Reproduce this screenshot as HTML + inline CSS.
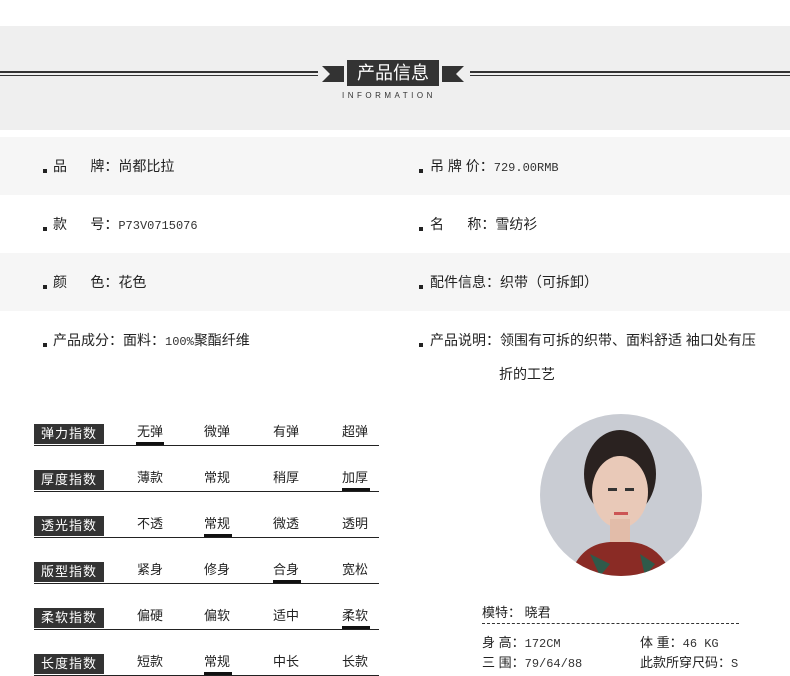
<!DOCTYPE html>
<html><head><meta charset="utf-8"><style>
body{margin:0;width:790px;height:676px;background:#fff;position:relative;overflow:hidden;font-family:"Liberation Sans","Noto Sans CJK SC",sans-serif;color:#222}
.a{position:absolute}
.hdr{left:0;top:26px;width:790px;height:104px;background:#efefef}
.row{left:0;width:790px;height:58px}
.t{font-size:14px;white-space:nowrap}
.dot{width:4px;height:4px;background:#222}
.m{font-family:"Liberation Mono","Noto Sans CJK SC",monospace;font-size:12px;color:#333}
.lab{left:34px;width:70px;height:20px;background:#333;color:#fff;font-size:13px;line-height:20px;text-align:center;letter-spacing:1px}
.ln{left:34px;width:345px;height:1px;background:#222}
.op{font-size:13px;width:40px;text-align:center;margin-top:-3px}
.bar{width:28px;height:3px;background:#111}
</style></head><body>
<div class="a hdr"></div>
<div class="a" style="left:0;top:71px;width:318px;height:2px;background:#333"></div>
<div class="a" style="left:0;top:75px;width:318px;height:1px;background:#333"></div>
<div class="a" style="left:470px;top:71px;width:320px;height:2px;background:#333"></div>
<div class="a" style="left:470px;top:75px;width:320px;height:1px;background:#333"></div>
<svg class="a" style="left:322px;top:63px" width="22" height="22"><polygon points="0,3 22,3 22,19 0,19 8,11" fill="#333"/></svg>
<svg class="a" style="left:442px;top:63px" width="22" height="22"><polygon points="0,3 22,3 14,11 22,19 0,19" fill="#333"/></svg>
<div class="a" style="left:347px;top:60px;width:92px;height:26px;background:#333;color:#fff;font-size:18px;line-height:26px;text-align:center">产品信息</div>
<div class="a" style="left:342px;top:91px;font-size:8px;letter-spacing:3.5px;color:#333">INFORMATION</div>

<div class="a row" style="top:137px;background:#f6f6f6"></div>
<div class="a row" style="top:253px;background:#f6f6f6"></div>

<div class="a dot" style="left:43px;top:169px"></div><div class="a t" style="left:53px;top:156px">品&nbsp;&nbsp;&nbsp;&nbsp;&nbsp;&nbsp;牌：尚都比拉</div>
<div class="a dot" style="left:419px;top:169px"></div><div class="a t" style="left:430px;top:156px">吊 牌 价：<span class="m">729.00RMB</span></div>
<div class="a dot" style="left:43px;top:227px"></div><div class="a t" style="left:53px;top:214px">款&nbsp;&nbsp;&nbsp;&nbsp;&nbsp;&nbsp;号：<span class="m">P73V0715076</span></div>
<div class="a dot" style="left:419px;top:227px"></div><div class="a t" style="left:430px;top:214px">名&nbsp;&nbsp;&nbsp;&nbsp;&nbsp;&nbsp;称：雪纺衫</div>
<div class="a dot" style="left:43px;top:285px"></div><div class="a t" style="left:53px;top:272px">颜&nbsp;&nbsp;&nbsp;&nbsp;&nbsp;&nbsp;色：花色</div>
<div class="a dot" style="left:419px;top:285px"></div><div class="a t" style="left:430px;top:272px">配件信息：织带（可拆卸）</div>
<div class="a dot" style="left:43px;top:343px"></div><div class="a t" style="left:53px;top:330px">产品成分：面料：<span class="m">100%</span>聚酯纤维</div>
<div class="a dot" style="left:419px;top:343px"></div><div class="a t" style="left:430px;top:330px">产品说明：领围有可拆的织带、面料舒适 袖口处有压</div>
<div class="a t" style="left:499px;top:364px">折的工艺</div>

<div class="a lab" style="top:424px">弹力指数</div><div class="a ln" style="top:445px"></div>
<div class="a op" style="left:130px;top:424px">无弹</div><div class="a op" style="left:197px;top:424px">微弹</div><div class="a op" style="left:266px;top:424px">有弹</div><div class="a op" style="left:335px;top:424px">超弹</div>
<div class="a bar" style="left:136px;top:442px"></div>
<div class="a lab" style="top:470px">厚度指数</div><div class="a ln" style="top:491px"></div>
<div class="a op" style="left:130px;top:470px">薄款</div><div class="a op" style="left:197px;top:470px">常规</div><div class="a op" style="left:266px;top:470px">稍厚</div><div class="a op" style="left:335px;top:470px">加厚</div>
<div class="a bar" style="left:342px;top:488px"></div>
<div class="a lab" style="top:516px">透光指数</div><div class="a ln" style="top:537px"></div>
<div class="a op" style="left:130px;top:516px">不透</div><div class="a op" style="left:197px;top:516px">常规</div><div class="a op" style="left:266px;top:516px">微透</div><div class="a op" style="left:335px;top:516px">透明</div>
<div class="a bar" style="left:204px;top:534px"></div>
<div class="a lab" style="top:562px">版型指数</div><div class="a ln" style="top:583px"></div>
<div class="a op" style="left:130px;top:562px">紧身</div><div class="a op" style="left:197px;top:562px">修身</div><div class="a op" style="left:266px;top:562px">合身</div><div class="a op" style="left:335px;top:562px">宽松</div>
<div class="a bar" style="left:273px;top:580px"></div>
<div class="a lab" style="top:608px">柔软指数</div><div class="a ln" style="top:629px"></div>
<div class="a op" style="left:130px;top:608px">偏硬</div><div class="a op" style="left:197px;top:608px">偏软</div><div class="a op" style="left:266px;top:608px">适中</div><div class="a op" style="left:335px;top:608px">柔软</div>
<div class="a bar" style="left:342px;top:626px"></div>
<div class="a lab" style="top:654px">长度指数</div><div class="a ln" style="top:675px"></div>
<div class="a op" style="left:130px;top:654px">短款</div><div class="a op" style="left:197px;top:654px">常规</div><div class="a op" style="left:266px;top:654px">中长</div><div class="a op" style="left:335px;top:654px">长款</div>
<div class="a bar" style="left:204px;top:672px"></div>

<svg class="a" style="left:540px;top:414px" width="162" height="162"><defs><clipPath id="c"><circle cx="81" cy="81" r="81"/></clipPath></defs>
<g clip-path="url(#c)"><rect width="162" height="162" fill="#c9ccd3"/>
<ellipse cx="80" cy="60" rx="36" ry="44" fill="#2a2220"/>
<ellipse cx="80" cy="78" rx="28" ry="36" fill="#e9c9b8"/>
<rect x="70" y="105" width="20" height="30" fill="#e2bca9"/>
<path d="M30 162 Q40 130 70 128 L90 128 Q120 130 132 162Z" fill="#8a2b25"/>
<path d="M50 140 L70 150 L60 162Z M100 140 L115 150 L105 162Z" fill="#2f5a4a"/>
<rect x="68" y="74" width="9" height="3" fill="#333"/><rect x="85" y="74" width="9" height="3" fill="#333"/>
<rect x="74" y="98" width="14" height="3" fill="#c55"/></g></svg>

<div class="a" style="left:482px;top:602px;font-size:13px">模特：&nbsp;晓君</div>
<div class="a" style="left:482px;top:623px;width:257px;border-top:1px dashed #333"></div>
<div class="a" style="left:482px;top:632px;font-size:13px">身 高：<span class="m">172CM</span></div>
<div class="a" style="left:640px;top:632px;font-size:13px">体 重：<span class="m">46 KG</span></div>
<div class="a" style="left:482px;top:652px;font-size:13px">三 围：<span class="m">79/64/88</span></div>
<div class="a" style="left:640px;top:652px;font-size:13px">此款所穿尺码：<span class="m">S</span></div>
</body></html>
